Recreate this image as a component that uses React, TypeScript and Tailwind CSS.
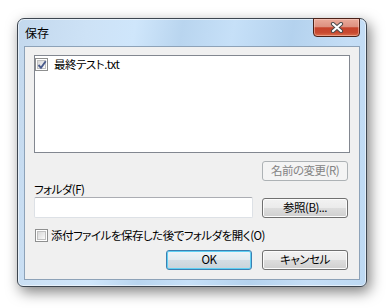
import React from "react";

const font = "[font-family:'Noto_Sans_CJK_JP','Noto_Sans',sans-serif] [font-feature-settings:'palt']";

function CheckBox({ checked }: { checked?: boolean }) {
  return (
    <span className="relative inline-block w-[13px] h-[13px] shrink-0 border border-[#8e8f8f] bg-white">
      <span className="absolute inset-[1px] border border-[#c0c0c0] bg-[linear-gradient(135deg,#d8d8d8_0%,#ececec_60%,#fbfbfb_100%)]" />
      {checked && (
        <svg className="absolute left-[1px] top-[1px]" width="10" height="10" viewBox="0 0 10 10">
          <path d="M1.5 5 L4 7.8 L8.7 1.2" fill="none" stroke="#4a5b8c" strokeWidth="1.9" />
        </svg>
      )}
    </span>
  );
}

function Button({
  children,
  disabled,
  focused,
}: {
  children: React.ReactNode;
  disabled?: boolean;
  focused?: boolean;
}) {
  if (disabled) {
    return (
      <div className="w-[86px] h-[20px] flex items-center justify-center rounded-[3px] border border-[#adb2b5] bg-[#f4f4f4] text-[#838383] leading-none">
        {children}
      </div>
    );
  }
  return (
    <div
      className={
        "w-[86px] h-[20px] flex items-center justify-center rounded-[3px] border leading-none text-black " +
        (focused
          ? "border-[#3c7fb1] shadow-[inset_0_0_0_1px_#5fd0f4] bg-[linear-gradient(to_bottom,#eef4f8_0%,#e3ebf0_48%,#d3dde4_52%,#c9d3da_100%)]"
          : "border-[#707070] shadow-[inset_0_0_0_1px_#fcfcfc] bg-[linear-gradient(to_bottom,#f2f2f2_0%,#ebebeb_48%,#dddddd_52%,#cfcfcf_100%)]")
      }
    >
      {children}
    </div>
  );
}

export default function App() {
  return (
    <div className={`w-[387px] h-[308px] bg-white pt-[18px] pl-[17px] ${font}`}>
      <div className="relative w-[350px] h-[269px] flex flex-col rounded-t-[7px] rounded-b-[6px] border border-[#3d4650] bg-[linear-gradient(100deg,#c3d8ed_0%,#cde2f6_18%,#cfe6fb_30%,#b9d5ef_42%,#c6e0f8_55%,#b4d2ee_70%,#c5def6_85%,#bdd9f3_100%)] shadow-[3px_5px_14px_rgba(0,0,0,0.5),inset_0_0_0_1px_rgba(255,255,255,0.55)]">
        <div className="h-[27px] flex items-center pl-[7px] text-[12px] text-black">保存</div>

        <div className="absolute top-[-1px] right-[6px] w-[47px] h-[19px] rounded-b-[4px] border border-[#4a2118] bg-[linear-gradient(to_bottom,#eaaa9a_0%,#dd9180_45%,#c6432b_52%,#c84a31_80%,#dc6f4c_100%)] shadow-[inset_0_0_0_1px_rgba(255,220,210,0.45)] flex items-center justify-center">
          <svg width="14" height="11" viewBox="0 0 14 11">
            <path d="M3 2 L11 9 M11 2 L3 9" stroke="#4b4b4b" strokeWidth="4.2" strokeLinecap="round" />
            <path d="M3 2 L11 9 M11 2 L3 9" stroke="#ffffff" strokeWidth="2.2" strokeLinecap="round" />
          </svg>
        </div>

        <div className="flex-1 mx-[6px] mb-[6px] border border-[#8da2b8] bg-[#f0f0f0] pl-[9px] flex flex-col text-[11.5px] tracking-[-0.5px] text-black">
          <div className="mt-[8px] w-[316px] h-[98px] border border-[#828790] bg-white pt-[2px]">
            <div className="flex items-center h-[13px]">
              <CheckBox checked />
              <span className="ml-[6px] leading-[15px]">最終テスト.txt</span>
            </div>
          </div>

          <div className="mt-[8px] w-[314px] flex justify-end">
            <Button disabled>名前の変更(R)</Button>
          </div>

          <div className="mt-[1px] h-[15px] leading-[15px]">フォルダ(F)</div>

          <div className="w-[314px] flex items-start justify-between">
            <div className="w-[219px] h-[21px] rounded-[2px] border border-[#dde1e6] border-t-[#abadb3] bg-white" />
            <div className="mt-[1px]">
              <Button>参照(B)...</Button>
            </div>
          </div>

          <div className="mt-[11px] flex items-center h-[13px] pl-[1px]">
            <CheckBox />
            <span className="ml-[3px] leading-[15px]">添付ファイルを保存した後でフォルダを開く(O)</span>
          </div>

          <div className="mt-[8px] w-[314px] flex justify-end gap-[10px]">
            <Button focused>OK</Button>
            <Button>キャンセル</Button>
          </div>
        </div>
      </div>
    </div>
  );
}
